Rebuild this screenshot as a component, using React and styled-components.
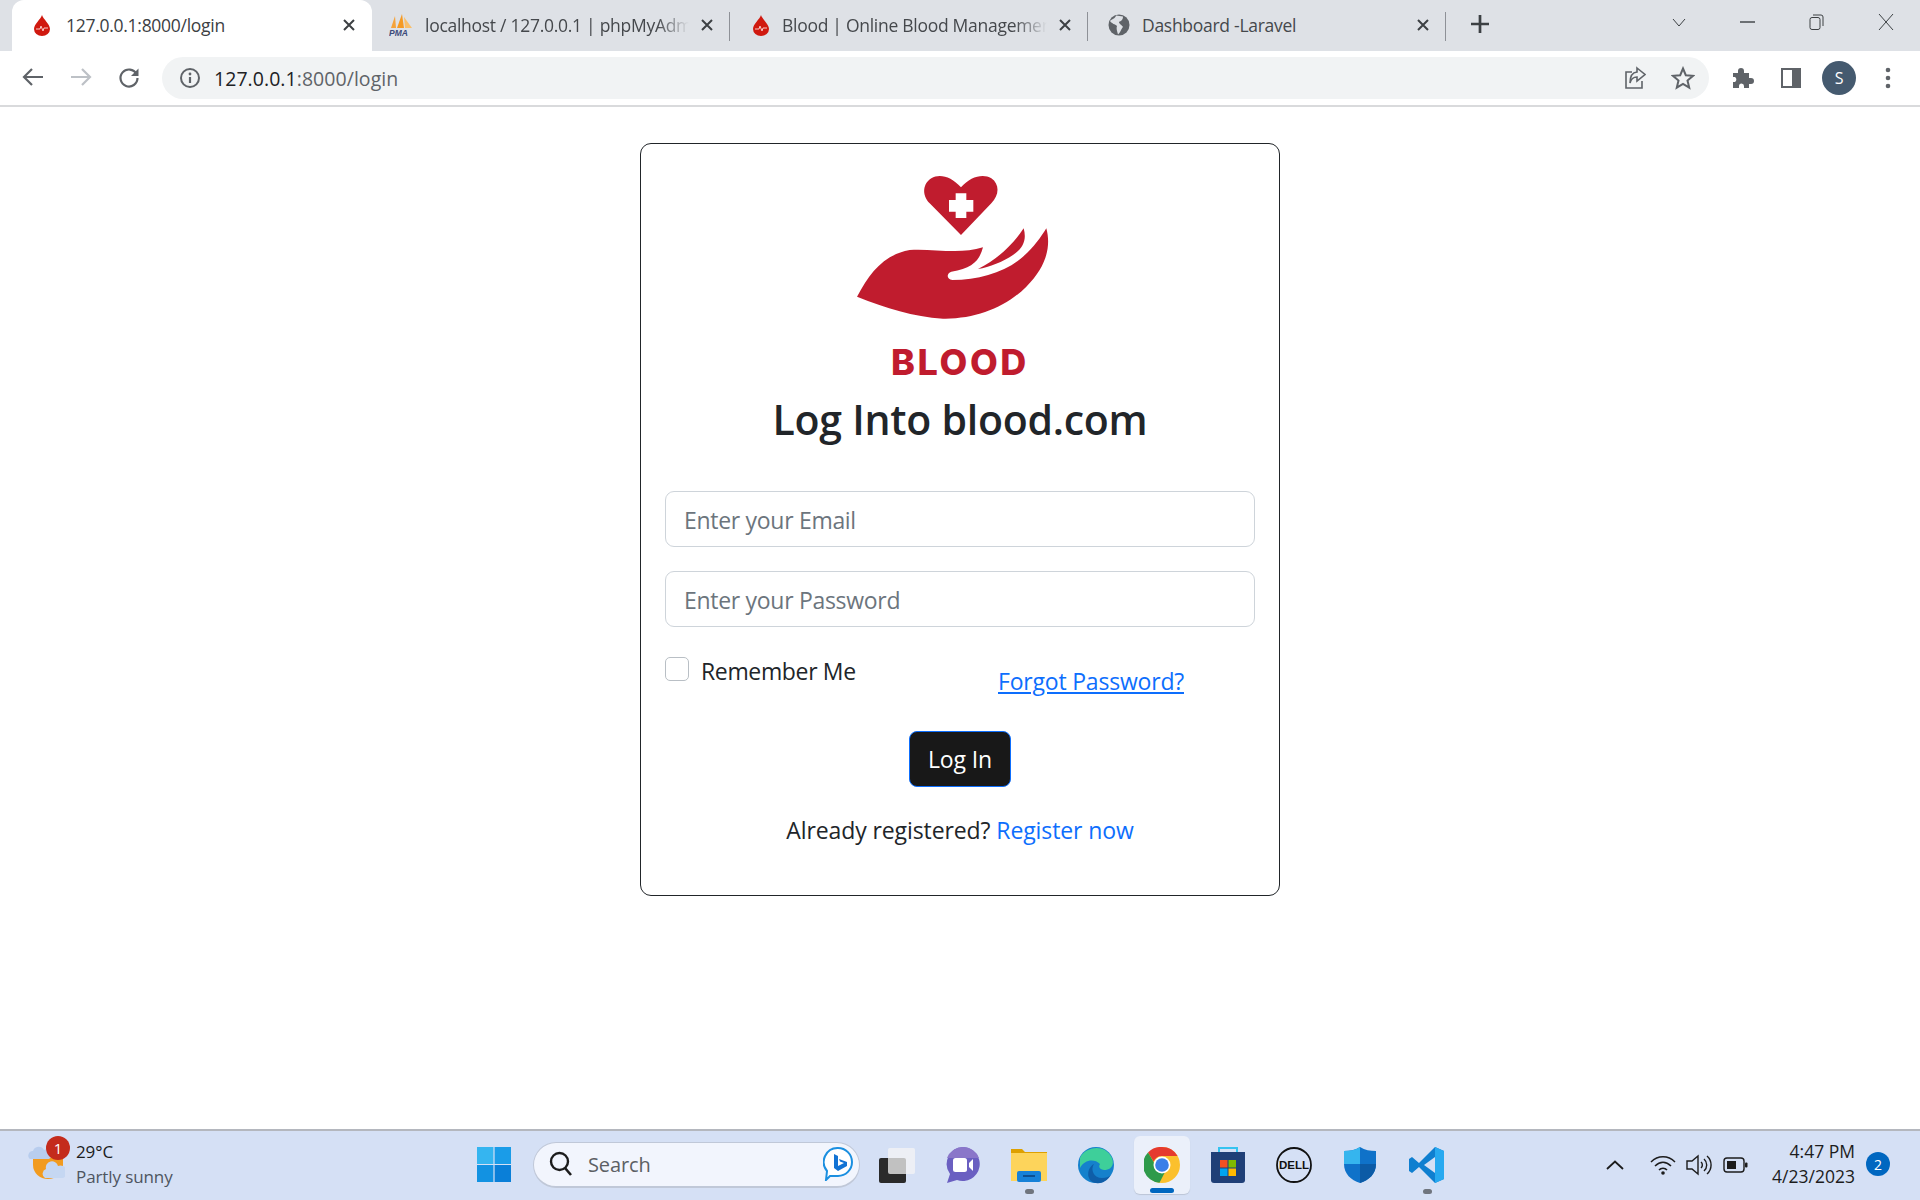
import styled, { createGlobalStyle } from 'styled-components'

const Global = createGlobalStyle`
  html, body { margin: 0; padding: 0; background: #fff; }
  body { font-family: "Open Sans", "Noto Sans", sans-serif; color: #212529; overflow: hidden; }
`

const Page = styled.div`
  width: 1920px;
  height: 1200px;
  display: flex;
  flex-direction: column;
`

/* browser chrome */
const TabStrip = styled.div`
  height: 51px;
  background: #dee1e6;
  display: flex;
  align-items: flex-end;
  padding-left: 12px;
  flex: none;
`
const Tab = styled.div`
  position: relative;
  width: ${p => (p.$active ? '360px' : '358px')};
  height: 51px;
  background: ${p => (p.$active ? '#fff' : 'transparent')};
  border-radius: 12px 12px 0 0;
  box-sizing: border-box;
  display: flex;
  align-items: center;
  padding: 0 17px 2px ${p => p.$left};
  gap: ${p => (p.$active ? '15px' : '12px')};
  flex: none;
  &::after {
    content: '';
    display: ${p => (p.$active ? 'none' : 'block')};
    position: absolute;
    right: 0;
    top: 12px;
    height: 29px;
    width: 1.5px;
    background: #8e9197;
  }
`
const TabTitle = styled.div`
  flex: 1;
  font-size: 17.5px;
  letter-spacing: -0.28px;
  white-space: nowrap;
  overflow: hidden;
  color: ${p => (p.$active ? '#3c4043' : '#45484c')};
  -webkit-mask-image: ${p => (p.$fade ? 'linear-gradient(90deg, #000 88%, transparent 100%)' : 'none')};
  mask-image: ${p => (p.$fade ? 'linear-gradient(90deg, #000 88%, transparent 100%)' : 'none')};
`
const NewTab = styled.div`
  width: 34px;
  height: 44px;
  margin: 0 0 5px 17px;
  display: flex;
  align-items: center;
  justify-content: center;
`
const WindowButtons = styled.div`
  margin-left: auto;
  height: 44px;
  margin-bottom: 7px;
  display: flex;
  align-items: center;
`
const WinBtn = styled.div`
  width: 69px;
  display: flex;
  justify-content: center;
`
const Toolbar = styled.div`
  height: 54px;
  background: #fff;
  border-bottom: 2px solid #d9dadc;
  display: flex;
  align-items: center;
  flex: none;
`
const NavBtn = styled.div`
  width: 48px;
  display: flex;
  justify-content: center;
  flex: none;
`
const NavGroup = styled.div`
  display: flex;
  padding-left: 9px;
  width: 162px;
  box-sizing: border-box;
  flex: none;
`
const Omnibox = styled.div`
  width: 1547px;
  height: 42px;
  background: #f1f3f4;
  border-radius: 21px;
  display: flex;
  align-items: center;
  padding: 0 2px 0 17px;
  box-sizing: border-box;
  flex: none;
`
const Url = styled.div`
  margin-left: 13px;
  flex: 1;
  font-size: 19.5px;
  letter-spacing: 0.05px;
  color: #5f6368;
  span { color: #202124; }
`
const OmniIcon = styled.div`
  width: 48px;
  display: flex;
  justify-content: center;
`
const ToolIcons = styled.div`
  display: flex;
  align-items: center;
  margin-left: 9px;
`
const ToolIcon = styled.div`
  width: 48.5px;
  display: flex;
  justify-content: center;
`
const Avatar = styled.div`
  width: 34px;
  height: 34px;
  border-radius: 50%;
  background: #455a6f;
  color: #fff;
  font-size: 16px;
  display: flex;
  align-items: center;
  justify-content: center;
`

/* login card */
const Main = styled.main`
  flex: 1;
  padding-top: 36px;
  display: flex;
  flex-direction: column;
  align-items: center;
`
const Card = styled.div`
  width: 640px;
  height: 753px;
  box-sizing: border-box;
  border: 1.5px solid #212529;
  border-radius: 11px;
  padding: 26px 24px 0;
  display: flex;
  flex-direction: column;
  align-items: center;
`
const LogoBox = styled.div`
  margin-right: 14px;
  height: 154px;
`
const Brand = styled.div`
  font-family: Inter, sans-serif;
  font-weight: 800;
  font-size: 36px;
  line-height: 38px;
  color: #c01c2e;
  margin-top: 19px;
  letter-spacing: 2.6px;
`
const Title = styled.h1`
  margin: 10px 0 0;
  font-size: 41px;
  font-weight: 600;
  line-height: 56px;
  letter-spacing: -0.25px;
`
const Field = styled.input`
  display: block;
  width: 100%;
  height: 56px;
  box-sizing: border-box;
  margin-top: ${p => p.$top};
  border: 1.5px solid #ced4da;
  border-radius: 9px;
  padding: 2px 18px 0;
  font-family: inherit;
  font-size: 23px;
  letter-spacing: -0.3px;
  color: #212529;
  background: #fff;
  &::placeholder { color: #6c757d; opacity: 1; }
`
const OptionsRow = styled.div`
  width: 100%;
  display: grid;
  grid-template-columns: 333px 1fr;
  margin-top: 30px;
  height: 50px;
`
const Remember = styled.label`
  display: flex;
  align-items: flex-start;
  gap: 12px;
  font-size: 23px;
  letter-spacing: -0.35px;
  line-height: 28px;
`
const CheckBox = styled.span`
  width: 24px;
  height: 24px;
  box-sizing: border-box;
  border: 1.5px solid #b9bfc5;
  border-radius: 5px;
  flex: none;
`
const Forgot = styled.a`
  display: inline-block;
  font-size: 23px;
  letter-spacing: -0.2px;
  line-height: 28px;
  color: #0d6efd;
  text-decoration: underline;
  margin-top: 10px;
`
const LoginBtn = styled.button`
  width: 102px;
  height: 56px;
  margin-top: 24px;
  background: #181818;
  border: 1.5px solid #0d6efd;
  border-radius: 8px;
  color: #fff;
  font-family: inherit;
  font-size: 23px;
  letter-spacing: -0.1px;
  padding: 0;
`
const Register = styled.p`
  margin: 26px 0 0;
  font-size: 23px;
  letter-spacing: -0.1px;
  line-height: 34px;
  a { color: #0d6efd; text-decoration: none; }
`

/* windows taskbar */
const Taskbar = styled.div`
  height: 71px;
  background: #d5e0f5;
  border-top: 2px solid #b4b7be;
  box-sizing: border-box;
  padding-bottom: 2px;
  display: flex;
  align-items: center;
  flex: none;
  position: relative;
`
const Weather = styled.div`
  width: 477px;
  display: flex;
  align-items: center;
  padding-left: 25px;
  box-sizing: border-box;
  flex: none;
`
const WeatherText = styled.div`
  margin-left: 11px;
  padding-bottom: 2px;
  font-size: 17px;
  line-height: 25px;
  letter-spacing: -0.1px;
  color: #1c1c1c;
  div + div { color: #4e5560; }
`
const WeatherIconWrap = styled.div`
  position: relative;
  width: 40px;
  height: 40px;
`
const Alert = styled.div`
  position: absolute;
  left: 21px;
  top: -9px;
  width: 24px;
  height: 24px;
  border-radius: 50%;
  background: #c42b1c;
  color: #fff;
  font-size: 15px;
  display: flex;
  align-items: center;
  justify-content: center;
`
const SearchPill = styled.div`
  width: 327px;
  height: 46px;
  margin-left: 22px;
  background: #f2f5fd;
  border: 1.5px solid #c0c8d8;
  border-bottom-width: 2px;
  border-radius: 23px;
  box-sizing: border-box;
  display: flex;
  align-items: center;
  padding: 0 6px 0 15px;
  flex: none;
`
const SearchText = styled.div`
  flex: 1;
  margin-left: 15px;
  font-size: 20px;
  letter-spacing: -0.1px;
  color: #5c5f64;
`
const Apps = styled.div`
  display: flex;
  margin-left: 4px;
  flex: none;
`
const AppSlot = styled.div`
  width: 66.2px;
  height: 58px;
  display: flex;
  align-items: center;
  justify-content: center;
  position: relative;
  &::before {
    content: '';
    display: ${p => (p.$current ? 'block' : 'none')};
    position: absolute;
    left: 5px;
    right: 5px;
    top: 0;
    bottom: 0;
    background: #ebf0fa;
    border-radius: 6px;
    box-shadow: 0 1px 1px #bcc5d6;
  }
  &::after {
    content: '';
    display: ${p => (p.$running || p.$current ? 'block' : 'none')};
    position: absolute;
    left: 50%;
    bottom: ${p => (p.$current ? '1px' : '0')};
    width: ${p => (p.$current ? '24px' : '9px')};
    margin-left: ${p => (p.$current ? '-12px' : '-4px')};
    height: 5px;
    border-radius: 3px;
    background: ${p => (p.$current ? '#0067c0' : '#70757e')};
  }
  svg { position: relative; }
`
const Tray = styled.div`
  margin-left: auto;
  display: flex;
  align-items: center;
  padding-right: 65px;
`
const TrayIcon = styled.div`
  width: 36px;
  display: flex;
  justify-content: center;
`
const Caret = styled(TrayIcon)`
  width: 36px;
  margin-right: 12px;
`
const Clock = styled.div`
  margin-left: 19px;
  padding-bottom: 2px;
  text-align: right;
  font-size: 17.5px;
  line-height: 25px;
  color: #1c1c1c;
`
const CountBadge = styled.div`
  position: absolute;
  right: 30px;
  top: 21px;
  width: 24px;
  height: 24px;
  border-radius: 50%;
  background: #0067c0;
  color: #fff;
  font-size: 14px;
  display: flex;
  align-items: center;
  justify-content: center;
`

/* drawings */
const DropIcon = () => (
  <svg width="18" height="22" viewBox="0 0 18 22">
    <path d="M9 1C10 5 17 10 17 15A8 7 0 0 1 1 15C1 10 8 5 9 1Z" fill="#d0190f" />
    <path d="M3 15H7L8 12L10 17L11 14H15" stroke="#f7c9c5" strokeWidth="1" fill="none" />
  </svg>
)
const PmaIcon = () => (
  <svg width="24" height="24" viewBox="0 0 24 24">
    <path d="M2 15L6 3L7 15Z" fill="#f5a33b" />
    <path d="M8 15L13 1L15 15Z" fill="#f59a23" />
    <path d="M16 15L15 4L23 15Z" fill="#f9bf6a" />
    <text x="0" y="23" fontFamily="Liberation Sans, sans-serif" fontWeight="700" fontStyle="italic" fontSize="8.5" fill="#3b4a7a">PMA</text>
  </svg>
)
const GlobeIcon = () => (
  <svg width="22" height="22" viewBox="0 0 22 22">
    <circle cx="11" cy="11" r="10.5" fill="#5f6368" />
    <path d="M8 1.5C7 5 4 5 2 7C4 10 7 10 9 12C8 14 9 17 10 20.5C13 18 13 15 15 13C14 11 11 10 11 8C13 7 15 6 15 2.5Z" fill="#dee1e6" />
  </svg>
)
const CloseIcon = ({ size = 12 }) => (
  <svg width={size} height={size} viewBox="0 0 12 12">
    <path d="M1 1L11 11M11 1L1 11" stroke="#3c4043" strokeWidth="2" />
  </svg>
)
const ArrowIcon = ({ dir, color }) => (
  <svg width="22" height="20" viewBox="0 0 22 20" style={{ transform: dir === 'right' ? 'scaleX(-1)' : 'none' }}>
    <path d="M21 10H2M10 2L2 10L10 18" stroke={color} strokeWidth="2.2" fill="none" />
  </svg>
)
const ReloadIcon = () => (
  <svg width="22" height="22" viewBox="0 0 22 22">
    <path d="M18.5 7A8.5 8.5 0 1 0 19.5 11" stroke="#5f6368" strokeWidth="2.2" fill="none" />
    <path d="M20.5 1.5V9H13Z" fill="#5f6368" />
  </svg>
)
const InfoIcon = () => (
  <svg width="22" height="22" viewBox="0 0 22 22">
    <circle cx="11" cy="11" r="9" stroke="#5f6368" strokeWidth="2" fill="none" />
    <path d="M11 10V16" stroke="#5f6368" strokeWidth="2.2" />
    <circle cx="11" cy="7" r="1.4" fill="#5f6368" />
  </svg>
)
const ShareIcon = () => (
  <svg width="22" height="24" viewBox="0 0 22 24">
    <path d="M8 6H2V22H18V15" stroke="#5f6368" strokeWidth="1.6" fill="none" />
    <path d="M13 2L21 8.5L13 15V11C9 11 7 13 6 17C6 11 8 6.500 13 6Z" stroke="#5f6368" strokeWidth="1.6" fill="none" />
  </svg>
)
const StarIcon = () => (
  <svg width="24" height="24" viewBox="0 0 24 24">
    <path d="M12 2.500L14.800 9.200L22 9.800L16.500 14.500L18.200 21.600L12 17.800L5.800 21.600L7.500 14.500L2 9.800L9.200 9.200Z" stroke="#5f6368" strokeWidth="2" fill="none" />
  </svg>
)
const PuzzleIcon = () => (
  <svg width="24" height="24" viewBox="0 0 24 24">
    <path d="M3 7H8V5A3 3 0 0 1 14 5V7H19V12H21A3 3 0 0 1 21 18H19V22H14V20A2.500 2.500 0 0 0 9 20V22H3V16H5A3 3 0 0 0 5 11H3Z" fill="#5f6368" />
  </svg>
)
const PanelIcon = () => (
  <svg width="20" height="20" viewBox="0 0 20 20">
    <path d="M1 1H19V19H1Z" stroke="#5f6368" strokeWidth="2" fill="none" />
    <path d="M11 1H19V19H11Z" fill="#5f6368" />
  </svg>
)
const Kebab = () => (
  <svg width="6" height="22" viewBox="0 0 6 22">
    <circle cx="3" cy="3" r="2.300" fill="#5f6368" />
    <circle cx="3" cy="11" r="2.300" fill="#5f6368" />
    <circle cx="3" cy="19" r="2.300" fill="#5f6368" />
  </svg>
)
const LogoMark = () => (
  <svg width="200" height="153.300" viewBox="100 30 600 460">
    <path d="M424 225L330 130C305 105 310 70 335 55C360 40 395 50 424 82C452 50 490 40 515 55C540 72 540 105 515 130Z" fill="#c01c2e" />
    <path d="M408 100H440V120H461V155H440V174H408V155H388V120H408Z" fill="#fff" />
    <path d="M112 410C150 340 190 285 270 270C340 265 420 285 490 262C480 300 460 325 395 335C380 340 380 358 398 360C480 360 560 335 610 290C640 265 665 230 680 205C695 260 680 320 620 380C560 440 470 478 370 476C280 470 200 445 112 410Z" fill="#c01c2e" />
    <path d="M475 327C530 300 580 255 612 205C622 240 610 265 580 285C550 305 510 322 475 327Z" fill="#c01c2e" />
  </svg>
)
const WeatherIcon = () => (
  <svg width="40" height="40" viewBox="0 0 40 40">
    <path d="M8 6H38V20A15 14 0 0 1 8 20Z" fill="#f29b1f" />
    <path d="M5 14A4.500 4.500 0 0 1 8 6A6 6 0 0 1 19 5A4.500 4.500 0 0 1 24 14Z" fill="#b8cdee" />
    <path d="M20 33A5 5 0 0 1 21 24A6 6 0 0 1 33 21A6 6 0 0 1 38 33Z" fill="#c5d7f2" />
  </svg>
)
const WinLogo = () => (
  <svg width="34" height="35" viewBox="0 0 34 35">
    <rect width="16.400" height="17" fill="#35b5f0" />
    <rect x="17.600" width="16.400" height="17" fill="#1a9ce8" />
    <rect y="18" width="16.400" height="17" fill="#1292e2" />
    <rect x="17.600" y="18" width="16.400" height="17" fill="#0a7fd8" />
  </svg>
)
const SearchGlass = () => (
  <svg width="24" height="26" viewBox="0 0 24 26">
    <circle cx="10.500" cy="10.500" r="8.500" stroke="#1c1c1c" strokeWidth="2.400" fill="none" />
    <path d="M16 17L22 24" stroke="#1c1c1c" strokeWidth="2.600" />
  </svg>
)
const BingIcon = () => (
  <svg width="30" height="34" viewBox="0 0 30 34">
    <path d="M15 1A14 14 0 0 1 15 29H7L3 33L4 24A14 14 0 0 1 15 1Z" fill="#fff" stroke="#1b8fe0" strokeWidth="2" />
    <path d="M11 7L15 9V19L21 16L17 14.500L16 12L24 15V19L15 24L11 21Z" fill="#1273d4" />
  </svg>
)
const TaskView = () => (
  <svg width="36" height="36" viewBox="0 0 36 36">
    <rect y="11" width="27" height="25" rx="2" fill="#2a2a2a" />
    <rect x="9" y="1" width="27" height="26" rx="2" fill="#f4f4f4" fillOpacity="0.75" />
  </svg>
)
const ChatIcon = () => (
  <svg width="36" height="38" viewBox="0 0 36 38">
    <path d="M18 1A17 17 0 1 1 12 34L2 37L5 28A17 17 0 0 1 18 1Z" fill="#6a5fc1" />
    <path d="M18 1A17 17 0 0 1 34 12H2A17 17 0 0 1 18 1Z" fill="#8a76c9" />
    <rect x="8" y="12" width="14" height="14" rx="2.500" fill="#fff" />
    <path d="M24 17L28 13V25L24 21Z" fill="#fff" />
  </svg>
)
const FolderIcon = () => (
  <svg width="38" height="34" viewBox="0 0 38 34">
    <path d="M1 1H12L15 4H37V8H1Z" fill="#dea000" />
    <path d="M1 5H37V33H1Z" fill="#fdd45b" />
    <rect x="7" y="23" width="24" height="11" rx="2" fill="#1681d8" />
    <rect x="13" y="27" width="12" height="2" fill="#0c4f91" />
  </svg>
)
const EdgeIcon = () => (
  <svg width="36" height="38" viewBox="0 0 36 38">
    <circle cx="18" cy="19" r="18" fill="#1581cc" />
    <path d="M2 12C6 2 26 -4 34 12C37 20 32 24 26 24C22 24 20 21 22 18C16 12 6 14 2 22Z" fill="#3ecf9a" />
    <path d="M18 37C8 36 8 22 16 18C12 24 16 32 24 32C28 32 31 31 33 29C29 35 24 38 18 37Z" fill="#0f5ea8" />
  </svg>
)
const ChromeIcon = () => (
  <svg width="36" height="36" viewBox="0 0 36 36">
    <circle cx="18" cy="18" r="18" fill="#fbc02d" />
    <path d="M18 0A18 18 0 0 1 33.600 9H18A9 9 0 0 0 9.600 14.600L4 5.400A18 18 0 0 1 18 0Z" fill="#e53a2f" />
    <path d="M4 5.400L12 19A7 7 0 0 0 21 25L15.500 35.800A18 18 0 0 1 4 5.400Z" fill="#2e9a4b" />
    <circle cx="18" cy="18" r="8.500" fill="#fff" />
    <circle cx="18" cy="18" r="6.800" fill="#3b7fe8" />
  </svg>
)
const StoreIcon = () => (
  <svg width="36" height="38" viewBox="0 0 36 38">
    <path d="M9 6V2H27V6" stroke="#35c3f0" strokeWidth="2" fill="none" />
    <path d="M1 6H35V34A3 3 0 0 1 32 37H4A3 3 0 0 1 1 34Z" fill="#1f3f77" />
    <rect x="10" y="14" width="7.500" height="7.500" fill="#f25022" />
    <rect x="18.500" y="14" width="7.500" height="7.500" fill="#7fba00" />
    <rect x="10" y="22.500" width="7.500" height="7.500" fill="#00a4ef" />
    <rect x="18.500" y="22.500" width="7.500" height="7.500" fill="#ffb900" />
  </svg>
)
const DellIcon = () => (
  <svg width="36" height="36" viewBox="0 0 36 36">
    <circle cx="18" cy="18" r="17" fill="none" stroke="#111" strokeWidth="1.800" />
    <text x="18" y="22" textAnchor="middle" fontFamily="Liberation Sans, sans-serif" fontWeight="700" fontSize="11.500" fill="#111">DELL</text>
  </svg>
)
const ShieldIcon = () => (
  <svg width="34" height="38" viewBox="0 0 34 38">
    <path d="M17 1C22 4 27 5 33 5V18C33 28 26 34 17 37C8 34 1 28 1 18V5C7 5 12 4 17 1Z" fill="#0f72c9" />
    <path d="M17 1C12 4 7 5 1 5V18H17Z" fill="#35b5ee" />
    <path d="M17 18H33C33 28 26 34 17 37Z" fill="#0c5ba6" />
  </svg>
)
const CodeIcon = () => (
  <svg width="36" height="38" viewBox="0 0 36 38">
    <path d="M26 1L35 5V33L26 37L10 21L3 27L0 25V13L3 11L10 17Z" fill="#0f7fd0" />
    <path d="M26 1L35 5V33L26 37Z" fill="#27a9f0" />
    <path d="M26 11L15 19L26 27Z" fill="#d5e0f5" />
  </svg>
)
const CaretUp = () => (
  <svg width="18" height="10" viewBox="0 0 18 10">
    <path d="M1 9L9 1.500L17 9" stroke="#1c1c1c" strokeWidth="1.800" fill="none" />
  </svg>
)
const WifiIcon = () => (
  <svg width="26" height="20" viewBox="0 0 26 20">
    <path d="M1 7C8 0 18 0 25 7M5 11C10 6 16 6 21 11M9 15C11 12.500 15 12.500 17 15" stroke="#1c1c1c" strokeWidth="1.500" fill="none" />
    <circle cx="13" cy="18" r="1.800" fill="#1c1c1c" />
  </svg>
)
const VolumeIcon = () => (
  <svg width="26" height="22" viewBox="0 0 26 22">
    <path d="M1 7H6L12 2V20L6 15H1Z" stroke="#1c1c1c" strokeWidth="1.400" fill="none" />
    <path d="M15 8A4 4 0 0 1 15 14M18 5A8 8 0 0 1 18 17M21 2A12 12 0 0 1 21 20" stroke="#1c1c1c" strokeWidth="1.400" fill="none" />
  </svg>
)
const BatteryIcon = () => (
  <svg width="25" height="16" viewBox="0 0 25 16">
    <rect x="1" y="1" width="20" height="14" rx="3" stroke="#1c1c1c" strokeWidth="1.400" fill="none" />
    <rect x="4" y="4" width="9" height="8" fill="#1c1c1c" />
    <rect x="22" y="5.500" width="2.500" height="5" rx="1" fill="#1c1c1c" />
  </svg>
)

function App() {
  return (
    <Page>
      <Global />
      <TabStrip>
        <Tab $active $left="21px">
          <DropIcon />
          <TabTitle $active>127.0.0.1:8000/login</TabTitle>
          <CloseIcon />
        </Tab>
        <Tab $left="17px">
          <PmaIcon />
          <TabTitle $fade>localhost / 127.0.0.1 | phpMyAdmin</TabTitle>
          <CloseIcon />
        </Tab>
        <Tab $left="22px">
          <DropIcon />
          <TabTitle $fade>Blood | Online Blood Management</TabTitle>
          <CloseIcon />
        </Tab>
        <Tab $left="20px">
          <GlobeIcon />
          <TabTitle>Dashboard -Laravel</TabTitle>
          <CloseIcon />
        </Tab>
        <NewTab>
          <svg width="18" height="18" viewBox="0 0 18 18">
            <path d="M9 0V18M0 9H18" stroke="#3c4043" strokeWidth="2.700" />
          </svg>
        </NewTab>
        <WindowButtons>
          <WinBtn>
            <svg width="14" height="9" viewBox="0 0 14 9">
              <path d="M1 1L7 8L13 1" stroke="#3c4043" strokeWidth="1" fill="none" />
            </svg>
          </WinBtn>
          <WinBtn>
            <svg width="15" height="2" viewBox="0 0 15 2">
              <path d="M0 1H15" stroke="#3c4043" strokeWidth="1.400" />
            </svg>
          </WinBtn>
          <WinBtn>
            <svg width="15" height="16" viewBox="0 0 15 16">
              <rect x="1" y="3.500" width="10" height="12" rx="2" stroke="#3c4043" fill="none" />
              <path d="M4 1H12A2 2 0 0 1 14 3V12" stroke="#3c4043" fill="none" />
            </svg>
          </WinBtn>
          <WinBtn>
            <svg width="16" height="16" viewBox="0 0 16 16">
              <path d="M1 0L15 16M15 0L1 16" stroke="#3c4043" strokeWidth="1" />
            </svg>
          </WinBtn>
        </WindowButtons>
      </TabStrip>

      <Toolbar>
        <NavGroup>
          <NavBtn><ArrowIcon color="#5f6368" /></NavBtn>
          <NavBtn><ArrowIcon dir="right" color="#bdc1c6" /></NavBtn>
          <NavBtn><ReloadIcon /></NavBtn>
        </NavGroup>
        <Omnibox>
          <InfoIcon />
          <Url><span>127.0.0.1</span>:8000/login</Url>
          <OmniIcon><ShareIcon /></OmniIcon>
          <OmniIcon><StarIcon /></OmniIcon>
        </Omnibox>
        <ToolIcons>
          <ToolIcon><PuzzleIcon /></ToolIcon>
          <ToolIcon><PanelIcon /></ToolIcon>
          <ToolIcon><Avatar>S</Avatar></ToolIcon>
          <ToolIcon><Kebab /></ToolIcon>
        </ToolIcons>
      </Toolbar>

      <Main>
        <Card>
          <LogoBox><LogoMark /></LogoBox>
          <Brand>BLOOD</Brand>
          <Title>Log Into blood.com</Title>
          <Field $top="44px" placeholder="Enter your Email" />
          <Field $top="24px" placeholder="Enter your Password" />
          <OptionsRow>
            <Remember><CheckBox />Remember Me</Remember>
            <div><Forgot>Forgot Password?</Forgot></div>
          </OptionsRow>
          <LoginBtn>Log In</LoginBtn>
          <Register>Already registered? <a>Register now</a></Register>
        </Card>
      </Main>

      <Taskbar>
        <Weather>
          <WeatherIconWrap>
            <WeatherIcon />
            <Alert>1</Alert>
          </WeatherIconWrap>
          <WeatherText>
            <div>29°C</div>
            <div>Partly sunny</div>
          </WeatherText>
        </Weather>
        <WinLogo />
        <SearchPill>
          <SearchGlass />
          <SearchText>Search</SearchText>
          <BingIcon />
        </SearchPill>
        <Apps>
          <AppSlot><TaskView /></AppSlot>
          <AppSlot><ChatIcon /></AppSlot>
          <AppSlot $running><FolderIcon /></AppSlot>
          <AppSlot><EdgeIcon /></AppSlot>
          <AppSlot $current><ChromeIcon /></AppSlot>
          <AppSlot><StoreIcon /></AppSlot>
          <AppSlot><DellIcon /></AppSlot>
          <AppSlot><ShieldIcon /></AppSlot>
          <AppSlot $running><CodeIcon /></AppSlot>
        </Apps>
        <Tray>
          <Caret><CaretUp /></Caret>
          <TrayIcon><WifiIcon /></TrayIcon>
          <TrayIcon><VolumeIcon /></TrayIcon>
          <TrayIcon><BatteryIcon /></TrayIcon>
          <Clock>
            <div>4:47 PM</div>
            <div>4/23/2023</div>
          </Clock>
        </Tray>
        <CountBadge>2</CountBadge>
      </Taskbar>
    </Page>
  )
}

export default App
